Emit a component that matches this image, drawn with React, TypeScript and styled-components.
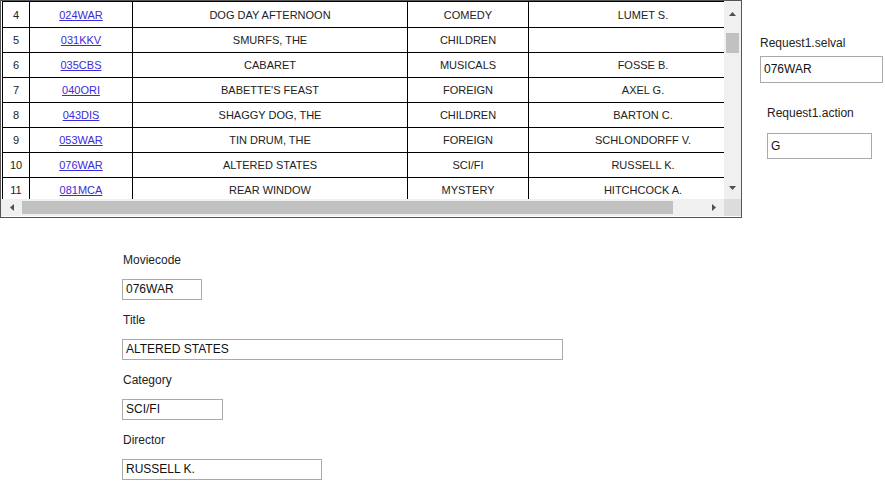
import React from "react";
import styled, { createGlobalStyle } from "styled-components";

const Global = createGlobalStyle`
  html, body { margin: 0; padding: 0; background: #fff; }
  body { font-family: "Liberation Sans", Arial, sans-serif; color: #222; }
`;

const Page = styled.div`
  width: 885px;
  height: 484px;
  overflow: hidden;
`;

const Top = styled.div`
  display: flex;
  align-items: flex-start;
`;

const Frame = styled.div`
  width: 742px;
  height: 218px;
  box-sizing: border-box;
  border: 1px solid #555;
  display: grid;
  grid-template-columns: 723px 17px;
  grid-template-rows: 198px 17px;
`;

const Viewport = styled.div`
  overflow: hidden;
  padding-left: 1px;
  box-sizing: border-box;
`;

const Table = styled.table`
  border-collapse: collapse;
  table-layout: fixed;
  width: 755px;
  font-size: 11px;
  color: #222;
`;

const Cell = styled.td<{ $first?: boolean }>`
  border: 1px solid #000;
  height: ${(p) => (p.$first ? 25 : 24)}px;
  padding: 0;
  text-align: center;
  white-space: nowrap;
  overflow: hidden;
`;

const CodeLink = styled.a`
  color: #3b2bd9;
  text-decoration: underline;
`;

const VBar = styled.div`
  background: #f0f0f0;
  display: flex;
  flex-direction: column;
`;

const HBar = styled.div`
  background: #f0f0f0;
  display: flex;
  align-items: stretch;
`;

const Corner = styled.div`
  background: #dcdcdc;
`;

const Arrow = styled.div<{ $w?: number; $h?: number }>`
  flex: 0 0 auto;
  width: ${(p) => (p.$w ? `${p.$w}px` : "auto")};
  height: ${(p) => (p.$h ? `${p.$h}px` : "auto")};
  display: flex;
  align-items: center;
  justify-content: center;
  svg { display: block; }
`;

const VTrack = styled.div`
  flex: 1;
  padding: 7px 2px 0;
`;

const VThumb = styled.div`
  height: 20px;
  background: #c1c1c1;
`;

const HTrack = styled.div`
  flex: 1;
  padding: 2px 0;
  display: flex;
`;

const HThumb = styled.div`
  width: 651px;
  background: #c1c1c1;
`;

const Side = styled.div`
  padding-left: 18px;
  display: flex;
  flex-direction: column;
`;

const Group = styled.div<{ $indent?: number; $top: number; $gap: number }>`
  margin-left: ${(p) => p.$indent ?? 0}px;
  margin-top: ${(p) => p.$top}px;
  display: flex;
  flex-direction: column;
  gap: ${(p) => p.$gap}px;
`;

const Label = styled.div`
  font-size: 12px;
  line-height: 16px;
  color: #222;
`;

const Field = styled.div<{ $w: number; $h: number }>`
  width: ${(p) => p.$w}px;
  height: ${(p) => p.$h}px;
  box-sizing: border-box;
  border: 1px solid #aaa;
  font-size: 12px;
  line-height: ${(p) => p.$h - 2}px;
  padding-left: 3px;
  color: #111;
  white-space: nowrap;
  overflow: hidden;
`;

const Form = styled.div`
  margin-top: 32px;
  padding-left: 122px;
  display: flex;
  flex-direction: column;
`;

const FormLabel = styled.div`
  font-size: 12px;
  line-height: 20px;
  height: 20px;
  margin-bottom: 9px;
  padding-left: 1px;
`;

const FormField = styled(Field)`
  margin-bottom: 10px;
`;

const Tri = ({ dir }: { dir: "up" | "down" | "left" | "right" }) => {
  const pts = {
    up: "0,4 3.5,0 7,4",
    down: "0,0 7,0 3.5,4",
    left: "4,0 4,7 0,3.5",
    right: "0,0 0,7 4,3.5",
  }[dir];
  const vert = dir === "up" || dir === "down";
  return (
    <svg width={vert ? 7 : 4} height={vert ? 4 : 7}>
      <polygon points={pts} fill="#505050" />
    </svg>
  );
};

const rows = [
  ["4", "024WAR", "DOG DAY AFTERNOON", "COMEDY", "LUMET S."],
  ["5", "031KKV", "SMURFS, THE", "CHILDREN", ""],
  ["6", "035CBS", "CABARET", "MUSICALS", "FOSSE B."],
  ["7", "040ORI", "BABETTE'S FEAST", "FOREIGN", "AXEL G."],
  ["8", "043DIS", "SHAGGY DOG, THE", "CHILDREN", "BARTON C."],
  ["9", "053WAR", "TIN DRUM, THE", "FOREIGN", "SCHLONDORFF V."],
  ["10", "076WAR", "ALTERED STATES", "SCI/FI", "RUSSELL K."],
  ["11", "081MCA", "REAR WINDOW", "MYSTERY", "HITCHCOCK A."],
];

const widths = [27, 103, 275, 121, 229];

export default function App() {
  return (
    <Page>
      <Global />
      <Top>
        <Frame>
          <Viewport>
            <Table>
              <colgroup>
                {widths.map((w, i) => (
                  <col key={i} style={{ width: w }} />
                ))}
              </colgroup>
              <tbody>
                {rows.map((r, i) => (
                  <tr key={r[0]}>
                    <Cell $first={i === 0}>{r[0]}</Cell>
                    <Cell $first={i === 0}>
                      <CodeLink href="#">{r[1]}</CodeLink>
                    </Cell>
                    <Cell $first={i === 0}>{r[2]}</Cell>
                    <Cell $first={i === 0}>{r[3]}</Cell>
                    <Cell $first={i === 0}>{r[4]}</Cell>
                  </tr>
                ))}
              </tbody>
            </Table>
          </Viewport>
          <VBar>
            <Arrow $h={25}>
              <Tri dir="up" />
            </Arrow>
            <VTrack>
              <VThumb />
            </VTrack>
            <Arrow $h={22}>
              <Tri dir="down" />
            </Arrow>
          </VBar>
          <HBar>
            <Arrow $w={21}>
              <Tri dir="left" />
            </Arrow>
            <HTrack>
              <HThumb />
            </HTrack>
            <Arrow $w={20}>
              <Tri dir="right" />
            </Arrow>
          </HBar>
          <Corner />
        </Frame>
        <Side>
          <Group $top={35} $gap={5}>
            <Label>Request1.selval</Label>
            <Field $w={123} $h={27}>076WAR</Field>
          </Group>
          <Group $indent={7} $top={22} $gap={12}>
            <Label>Request1.action</Label>
            <Field $w={105} $h={26}>G</Field>
          </Group>
        </Side>
      </Top>
      <Form>
        <FormLabel>Moviecode</FormLabel>
        <FormField $w={80} $h={21}>076WAR</FormField>
        <FormLabel>Title</FormLabel>
        <FormField $w={441} $h={21}>ALTERED STATES</FormField>
        <FormLabel>Category</FormLabel>
        <FormField $w={101} $h={21}>SCI/FI</FormField>
        <FormLabel>Director</FormLabel>
        <FormField $w={200} $h={21}>RUSSELL K.</FormField>
      </Form>
    </Page>
  );
}
